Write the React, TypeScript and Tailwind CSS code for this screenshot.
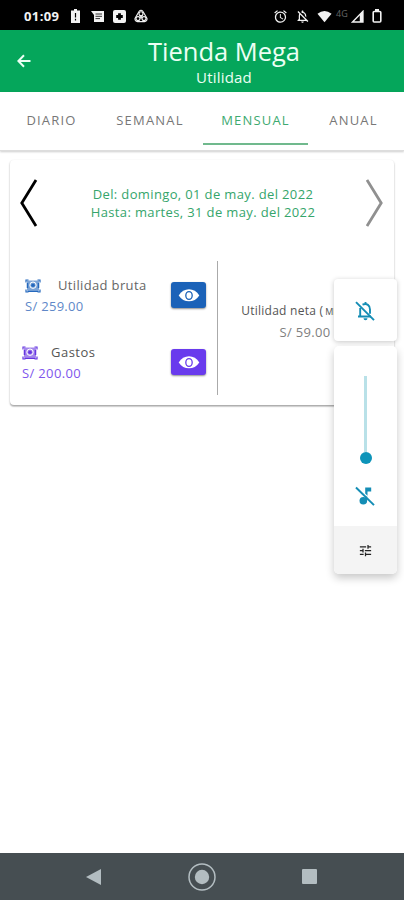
import { MdAlarm, MdOutlineNotificationsOff, MdTune } from 'react-icons/md'

const tabs = [
  { label: 'DIARIO', width: 'w-[103px]' },
  { label: 'SEMANAL', width: 'w-[94px]' },
  { label: 'MENSUAL', width: 'w-[105px]', active: true },
  { label: 'ANUAL', width: 'w-[91px]' },
]

function StatusBar() {
  return (
    <div className="flex h-[30px] items-center bg-black pt-[2px] text-[#f2f2f2]">
      <span className="ml-6 w-[45px] text-[13px] leading-none font-bold tracking-[0.4px]">01:09</span>
      <svg className="mr-px ml-[2px] h-[14px] w-[9px]" viewBox="0 0 9 14">
        <path d="M3 0h3v1.5h3V14H0V1.5h3Z" fill="currentColor" />
        <path d="M4.5 4v4.5M4.5 9.8v1.6" stroke="#000" strokeWidth="1.2" />
      </svg>
      <svg className="ml-[10px] h-[13px] w-[13px]" viewBox="0 0 13 13" fill="currentColor">
        <path d="M0 1h13v11H3V5L0 1Z" />
        <path d="M4.5 4h6.5M4.5 6.3h6.5M4.5 8.6h4.5" stroke="#000" strokeWidth=".8" />
      </svg>
      <svg className="ml-[9px] h-[13px] w-[13px]" viewBox="0 0 13 13">
        <rect width="13" height="13" rx="2" fill="currentColor" />
        <path d="M6.5 3.2v6.6M3.2 6.5h6.6" stroke="#000" strokeWidth="2.8" />
      </svg>
      <svg className="ml-2 h-[14px] w-[14px]" viewBox="0 0 14 14" fill="none" stroke="currentColor" strokeWidth="1.1">
        <path d="M5 2.5Q7 0 9 2.5L13 9.5Q13.2 12.5 10.5 12.6h-7Q.8 12.5 1 9.5Z" />
        <circle cx="7" cy="4.8" r="2" />
        <circle cx="4" cy="9.6" r="2" />
        <circle cx="10" cy="9.6" r="2" />
        <circle cx="7" cy="8" r="1" />
      </svg>
      <MdAlarm className="ml-auto h-[15px] w-[15px]" />
      <MdOutlineNotificationsOff className="ml-[7px] h-[15px] w-[15px]" />
      <svg className="ml-[7px] h-[13px] w-[15px]" viewBox="0 0 16 13" fill="currentColor">
        <path d="M.5 3.5Q8-2 15.5 3.5L8 12.5Z" />
      </svg>
      <span className="ml-[4px] w-[15px] -translate-y-[3px] text-[9px] leading-none text-[#666]">4G</span>
      <svg className="h-[13px] w-[13px]" viewBox="0 0 13 13">
        <path d="M1.5 12 12 1.2V12Z" fill="none" stroke="currentColor" strokeWidth="1.3" />
        <path d="M8.8 4.5 12 1v11H8.8Z" fill="currentColor" />
      </svg>
      <svg className="mr-[22px] ml-2 h-[14px] w-[10px]" viewBox="0 0 10 14">
        <rect x="1.2" y="2.5" width="7.6" height="10.5" rx="1" fill="none" stroke="currentColor" strokeWidth="1.6" />
        <path d="M3 0h4v2H3Z" fill="currentColor" />
      </svg>
    </div>
  )
}

function MoneyIcon({ className }: { className: string }) {
  return (
    <svg className={className} viewBox="0 0 16 14" fill="none" stroke="currentColor">
      <path d="M1 3.5V1h2.5M12.5 1H15v2.5M1 10.5V13h2.5M12.5 13H15v-2.5" strokeWidth="1.2" />
      <path d="M2 1.5h12v10H2Z" fill="currentColor" fillOpacity=".6" stroke="none" />
      <circle cx="8" cy="6.2" r="3.2" stroke="#fff" strokeWidth="1" />
      <circle cx="8" cy="6.2" r="1.8" fill="currentColor" stroke="none" />
      <path d="M2.5 4v5M13.5 4v5M2.5 12.3h11" strokeWidth="1.5" />
    </svg>
  )
}

function EyeButton({ className }: { className: string }) {
  return (
    <button className={`flex h-[26px] w-[35px] shrink-0 items-center justify-center rounded-[3px] shadow-[0_1px_2px_rgba(0,0,0,0.45)] ${className}`}>
      <svg className="h-[15px] w-[22px]" viewBox="0 0 23 16">
        <path d="M.5 8C5.5-.8 17.5-.8 22.5 8 17.5 16.3 5.5 16.3.5 8Z" fill="#fff" />
        <ellipse cx="11.5" cy="8" rx="3.4" ry="4.1" fill="none" stroke="currentColor" strokeWidth="1.4" />
      </svg>
    </button>
  )
}

function VolumePanel() {
  return (
    <div className="absolute top-[279px] left-[334px] flex w-[63px] flex-col gap-[5px] text-[#148db5]">
      <div className="flex h-[62px] items-center justify-center rounded-[4px] bg-white pt-[2px] pr-px shadow-[0_1px_5px_rgba(0,0,0,0.22)]">
        <svg className="h-5 w-5" viewBox="0 0 20 20" fill="none" stroke="currentColor" strokeWidth="1.9">
          <path d="M5.2 7v8.2M3 15.5h13M7.5 3.6C12 1.8 15 4.5 15 8.5v4.3M10.5 1v2" />
          <path d="M8.5 17.3h4a2 2 0 0 1-4 0Z" fill="currentColor" stroke="none" />
          <path d="m1 1.2 18 18" />
        </svg>
      </div>
      <div className="flex h-[228px] flex-col items-center overflow-hidden rounded-[5px] bg-white pt-[30px] shadow-[0_4px_8px_rgba(0,0,0,0.22)]">
        <div className="h-[76px] w-[3px] bg-[#b9e1e8]" />
        <div className="h-3 w-3 rounded-full bg-[#0d94b9]" />
        <svg className="mt-[22px] mr-px h-5 w-5" viewBox="0 0 20 20" fill="currentColor">
          <circle cx="8.3" cy="14.7" r="3.8" />
          <path d="M10.2 1.5h6v4h-3.7v4.2l-2.3-2.3ZM10.2 10.5h2v4h-2Z" />
          <path d="m1 1.5 18 17.6" stroke="currentColor" strokeWidth="2" />
        </svg>
        <div className="mt-auto flex h-12 w-full items-center justify-center bg-[#f4f4f4] text-[#222]">
          <MdTune className="h-[15px] w-[15px]" />
        </div>
      </div>
    </div>
  )
}

export default function App() {
  return (
    <div className="relative flex h-[900px] w-[404px] flex-col overflow-hidden bg-white font-['Open_Sans',sans-serif]">
      <StatusBar />

      {/* Header */}
      <header className="flex h-[62px] items-center bg-[#05a65b] text-[#ecfff4]">
        <svg className="ml-[17px] h-[14px] w-[14px]" viewBox="0 0 14 14" fill="none" stroke="currentColor" strokeWidth="2">
          <path d="M13.5 7H1.8M7 1.3 1.4 7 7 12.7" />
        </svg>
        <div className="ml-[14px] flex w-[358px] flex-col items-center pb-px">
          <h1 className="text-[25.5px] leading-[33px]">Tienda Mega</h1>
          <h2 className="text-[15px] leading-[18px] font-medium tracking-[0.2px]">Utilidad</h2>
        </div>
      </header>

      {/* Tabs */}
      <nav className="flex h-[59px] shrink-0 border-b border-[#ddd] shadow-[0_1px_2px_rgba(0,0,0,0.2)]">
        {tabs.map((tab) => (
          <div key={tab.label} className={`flex h-[53px] items-center justify-center pt-[7px] text-[13px] tracking-[1.2px] ${tab.width} ${tab.active ? 'ml-[6px] border-b-2 border-[#70b98d] text-[#3daa70]' : 'border-b-2 border-transparent text-[#777]'}`}>
            {tab.label}
          </div>
        ))}
      </nav>

      {/* Profit card */}
      <main className="mx-[10px] mt-[9px] h-[245px] shrink-0 rounded-[4px] bg-white shadow-[0_1px_2px_rgba(0,0,0,0.3),0_2px_1px_rgba(0,0,0,0.12)]">
        <div className="flex h-[101px] items-start justify-between px-[10px] pt-[19px]">
          <svg className="h-12 w-[18px]" viewBox="0 0 18 48" fill="none" stroke="#000" strokeWidth="2.8">
            <path d="M16 1 1.8 24 16 47" />
          </svg>
          <div className="mt-[6px] ml-[2px] text-center text-[13px] leading-[18px] tracking-[0.36px] whitespace-nowrap text-[#35a56b]">
            <p>Del: domingo, 01 de may. del 2022</p>
            <p>Hasta: martes, 31 de may. del 2022</p>
          </div>
          <svg className="h-12 w-[18px]" viewBox="0 0 18 48" fill="none" stroke="#909090" strokeWidth="2.8">
            <path d="M1 1 15.2 24 1 47" />
          </svg>
        </div>

        <div className="flex h-[134px]">
          <div className="w-[208px] border-r border-[#aaa] pt-[14px] pr-[11px]">
            <div className="flex h-[67px] items-start justify-between pl-[15px]">
              <div>
                <div className="flex h-[21px] items-center text-[13px] text-[#666]">
                  <MoneyIcon className="h-[14px] w-4 text-[#2468bd]" />
                  <span className="ml-[17px] tracking-[0.35px]">Utilidad bruta</span>
                </div>
                <p className="text-[13px] leading-5 tracking-[0.3px] text-[#6088c8]">S/ 259.00</p>
              </div>
              <EyeButton className="mt-[7px] bg-[#1b62b8] text-[#1b62b8]" />
            </div>
            <div className="flex items-start justify-between pl-3">
              <div>
                <div className="flex h-[21px] items-center text-[13px] text-[#555]">
                  <MoneyIcon className="h-[14px] w-4 text-[#6535e0]" />
                  <span className="ml-[13px] tracking-[0.5px]">Gastos</span>
                </div>
                <p className="text-[13px] leading-5 tracking-[0.35px] text-[#8056ed]">S/ 200.00</p>
              </div>
              <EyeButton className="mt-[7px] bg-[#693bed] text-[#693bed]" />
            </div>
          </div>
          <div className="flex flex-1 flex-col items-center pt-[40px] whitespace-nowrap">
            <p className="text-[12px] leading-5 font-medium tracking-[0.25px] text-[#555]">
              Utilidad neta (<span className="ml-[2px] text-[9px] tracking-normal">MENSUAL</span>)
            </p>
            <p className="mr-[2px] text-[13px] leading-5 tracking-[0.3px] text-[#808080]">S/ 59.00</p>
          </div>
        </div>
      </main>

      <VolumePanel />

      {/* Android navigation */}
      <footer className="mt-auto flex h-[47px] items-center bg-[#464e52] text-[#b3bdc1]">
        <svg className="ml-[86px] h-4 w-[15px]" viewBox="0 0 15 16" fill="currentColor">
          <path d="M0 8 15 0v16Z" />
        </svg>
        <svg className="ml-[87px] h-7 w-7" viewBox="0 0 28 28" fill="none" stroke="currentColor">
          <circle cx="14" cy="14" r="13" strokeWidth="1.5" />
          <circle cx="14" cy="14" r="7.2" fill="currentColor" stroke="none" />
        </svg>
        <div className="ml-[86px] h-[15px] w-[15px] rounded-[1px] bg-[#b3bdc1]" />
      </footer>
    </div>
  )
}
